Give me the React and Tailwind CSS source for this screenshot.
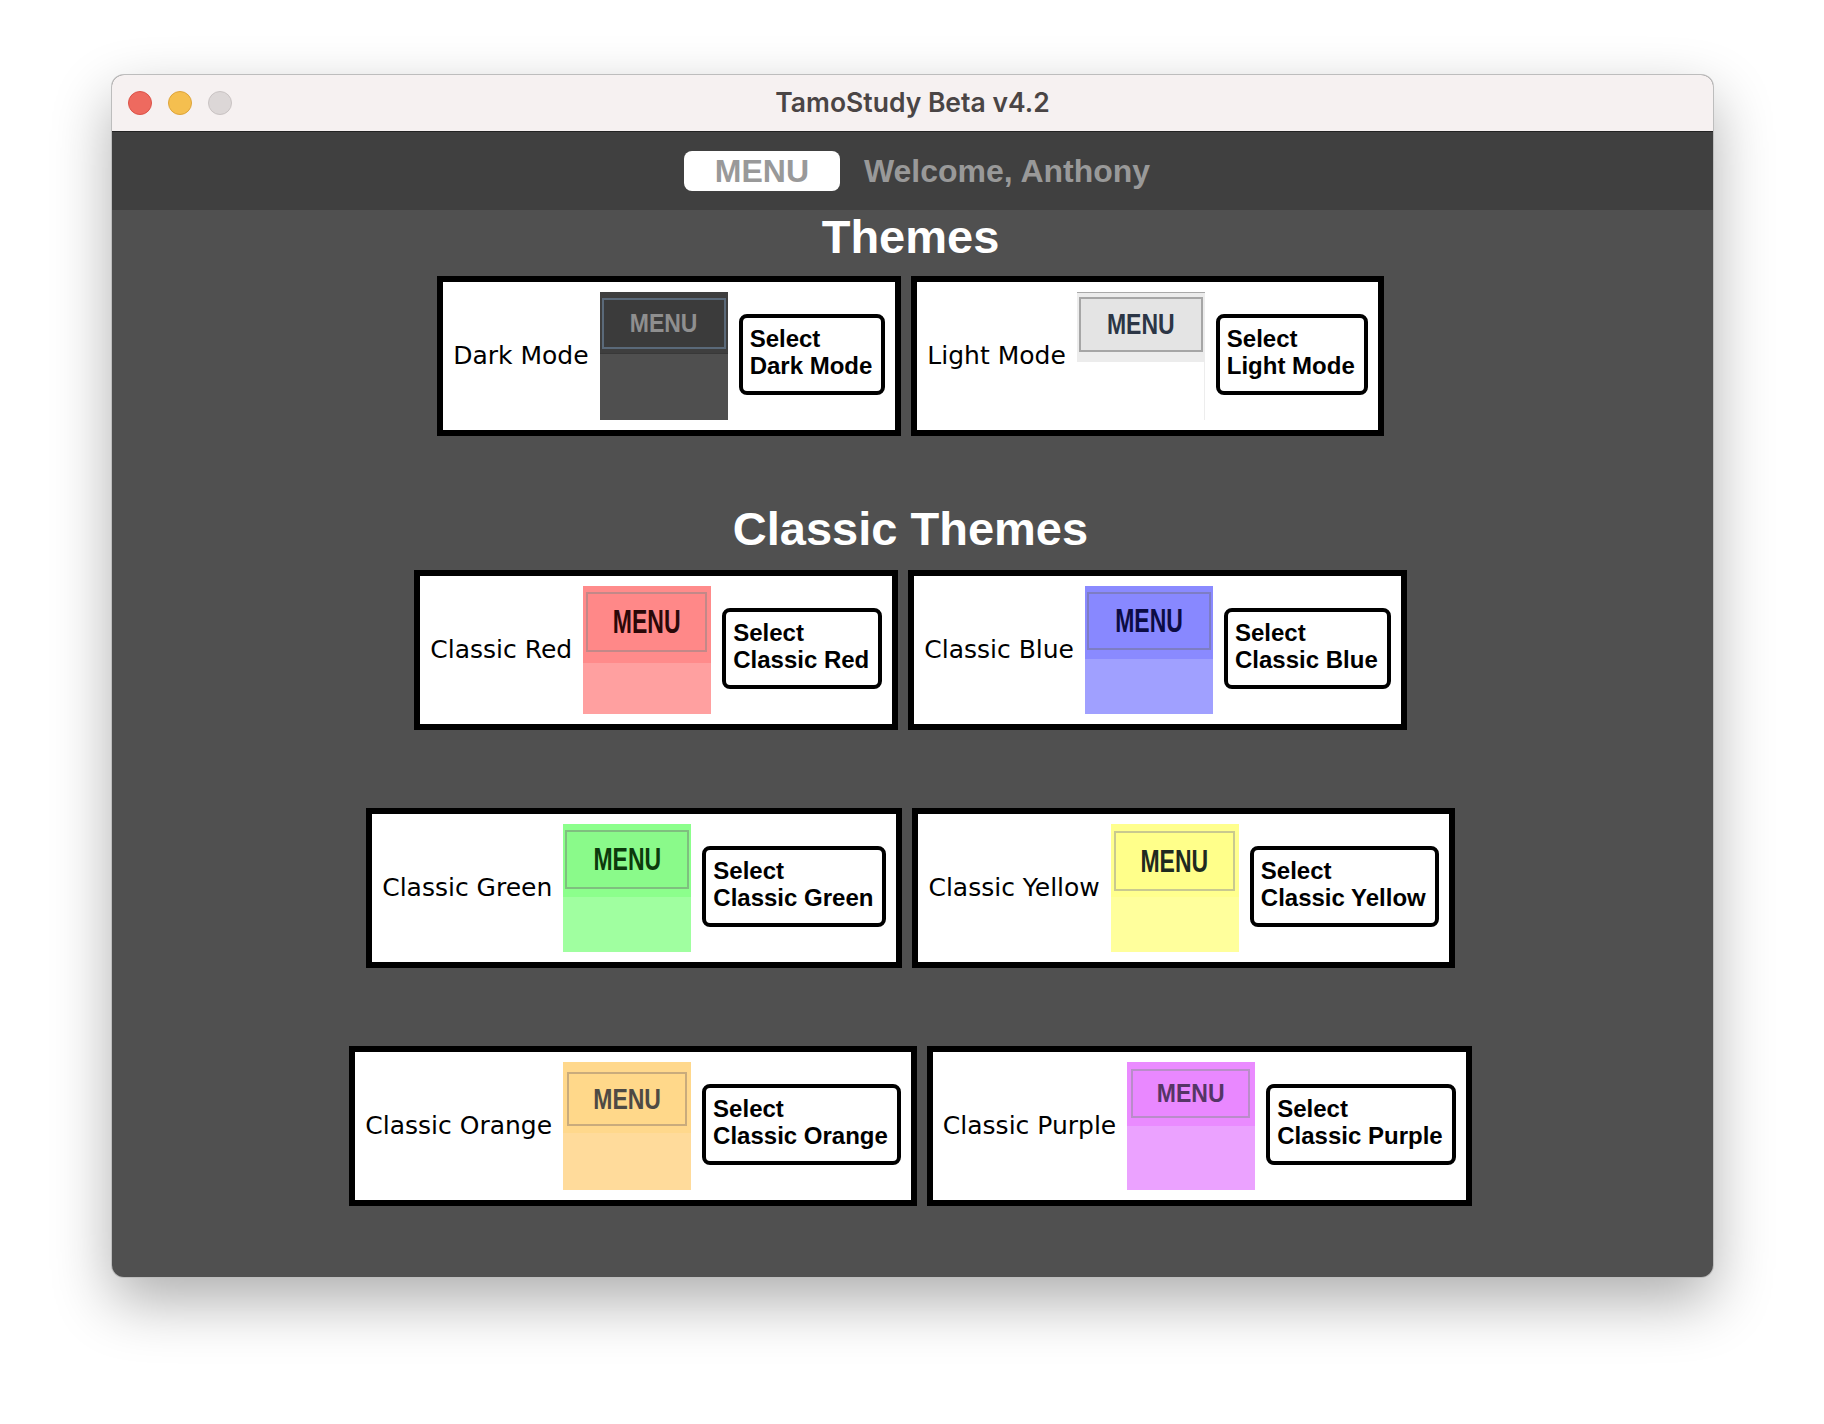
import React from "react";

const THEMES = [
  [
    {
      name: "Dark Mode",
      top: "h-[62px] bg-[#3e3e3e] border-b border-[#383838]",
      body: "bg-[#4f4f4f]",
      menu: "mt-[6px] mx-[2px] h-[51px] bg-[#3b3b3b] border-2 border-[#5a6979] text-[#8f8f8f]",
      scale: "scale-y-[1.15]",
    },
    {
      name: "Light Mode",
      top: "h-[70px] bg-[#ececec] border-t border-[#a9a9a9]",
      body: "bg-white border-r border-[#ededed]",
      menu: "mt-[4px] mx-[2px] h-[55px] bg-[#e4e4e4] border-2 border-[#a6a6a6] text-[#2c3646]",
      scale: "scale-y-[1.25]",
    },
  ],
  [
    {
      name: "Classic Red",
      top: "h-[77px] bg-[#ff8b8b]",
      body: "bg-[#ffa0a0]",
      menu: "mt-[6px] ml-[3px] w-[121px] h-[60px] bg-[#ff8888] border-2 border-[#c38888] text-[#2a0808]",
      scale: "scale-y-[1.45]",
    },
    {
      name: "Classic Blue",
      top: "h-[73px] bg-[#8a8aff]",
      body: "bg-[#a0a0ff]",
      menu: "mt-[6px] mx-[2px] h-[58px] bg-[#8888ff] border-2 border-[#7d7dc4] text-[#0c0c44]",
      scale: "scale-y-[1.45]",
    },
  ],
  [
    {
      name: "Classic Green",
      top: "h-[73px] bg-[#8cff8c]",
      body: "bg-[#a0ffa0]",
      menu: "mt-[6px] mx-[2px] h-[59px] bg-[#8afa8a] border-2 border-[#7fbf7f] text-[#0c3a0c]",
      scale: "scale-y-[1.35]",
    },
    {
      name: "Classic Yellow",
      top: "h-[73px] bg-[#ffff8e]",
      body: "bg-[#ffff9c]",
      menu: "mt-[7px] ml-[3px] w-[121px] h-[60px] bg-[#ffff8a] border-2 border-[#c9c98f] text-[#1f2a1f]",
      scale: "scale-y-[1.35]",
    },
  ],
  [
    {
      name: "Classic Orange",
      top: "h-[71px] bg-[#ffd88c]",
      body: "bg-[#ffdb9b]",
      menu: "mt-[10px] ml-[4px] w-[120px] h-[54px] bg-[#ffd88a] border-2 border-[#c9ab7c] text-[#4e4a44]",
      scale: "scale-y-[1.3]",
    },
    {
      name: "Classic Purple",
      top: "h-[64px] bg-[#ea8bff]",
      body: "bg-[#eba2ff]",
      menu: "mt-[7px] ml-[4px] w-[119px] h-[49px] bg-[#e988ff] border-2 border-[#b98cc9] text-[#553566]",
      scale: "scale-y-[1.15]",
    },
  ],
];

function Preview({ theme }) {
  return (
    <div className="w-[128px] h-[128px] flex flex-col shrink-0 overflow-hidden">
      <div className={`flex flex-col shrink-0 ${theme.top}`}>
        <div className={`flex items-center justify-center ${theme.menu}`}>
          <span
            className={`inline-block text-[23px] leading-none font-bold ${theme.scale}`}
            style={{ fontFamily: '"Liberation Sans", Arial, sans-serif' }}
          >
            MENU
          </span>
        </div>
      </div>
      <div className={`flex-1 ${theme.body}`} />
    </div>
  );
}

function ThemeCard({ theme }) {
  return (
    <div className="flex items-center gap-[11px] border-[6px] border-black bg-white py-[10px] pl-[10px] pr-[10px]">
      <div
        className="text-[25px] text-black whitespace-nowrap"
        style={{ fontFamily: '"DejaVu Sans", sans-serif' }}
      >
        {theme.name}
      </div>
      <Preview theme={theme} />
      <button
        className="mb-[4px] rounded-[8px] border-[4px] border-black bg-white pl-[7px] pr-[9px] pt-[7px] pb-[12px] text-left text-[24px] leading-[27px] font-bold text-black whitespace-nowrap"
        style={{ fontFamily: '"Liberation Sans", Arial, sans-serif' }}
      >
        Select
        <br />
        {theme.name}
      </button>
    </div>
  );
}

function ThemeRow({ pair, className }) {
  return (
    <div className={`flex justify-center gap-[10px] ${className}`}>
      {pair.map((t) => (
        <ThemeCard key={t.name} theme={t} />
      ))}
    </div>
  );
}

export default function App() {
  return (
    <div className="min-h-screen w-full bg-white pt-[75px] pl-[112px]">
      <div className="w-[1601px] h-[1202px] rounded-[12px] overflow-hidden flex flex-col bg-[#505050] ring-1 ring-[#bdbdbd] shadow-[0_24px_60px_rgba(0,0,0,0.32)]">
        {/* title bar */}
        <div className="h-[57px] shrink-0 grid grid-cols-[1fr_auto_1fr] items-center bg-[#f6f1f1] border-b border-[#232323]">
          <div className="flex items-center gap-[16px] pl-[16px]">
            <span className="w-[24px] h-[24px] rounded-full bg-[#ee6a5f] border border-[#dc5248]" />
            <span className="w-[24px] h-[24px] rounded-full bg-[#f5bf4f] border border-[#dea43a]" />
            <span className="w-[24px] h-[24px] rounded-full bg-[#dcd7d7] border border-[#c9c3c3]" />
          </div>
          <div
            className="text-[26.5px] font-semibold text-[#4a4545]"
            style={{ fontFamily: "Inter, sans-serif" }}
          >
            TamoStudy Beta v4.2
          </div>
          <div />
        </div>

        {/* top bar */}
        <div
          className="h-[78px] shrink-0 flex items-center justify-center gap-[24px] pl-[9px] bg-[#404040]"
          style={{ fontFamily: '"Liberation Sans", Arial, sans-serif' }}
        >
          <button className="w-[156px] h-[40px] rounded-[8px] bg-white text-[32px] leading-none font-bold text-[#999999]">
            MENU
          </button>
          <div className="text-[32px] font-bold text-[#999999]">Welcome, Anthony</div>
        </div>

        {/* content */}
        <div
          className="flex-1 flex flex-col items-center pr-[4px]"
          style={{ fontFamily: '"Liberation Sans", Arial, sans-serif' }}
        >
          <h1 className="text-[47px] leading-[53px] font-bold text-white">Themes</h1>
          <ThemeRow pair={THEMES[0]} className="mt-[13px]" />
          <h1 className="mt-[66px] text-[47px] leading-[53px] font-bold text-white">Classic Themes</h1>
          <ThemeRow pair={THEMES[1]} className="mt-[15px]" />
          <ThemeRow pair={THEMES[2]} className="mt-[78px]" />
          <ThemeRow pair={THEMES[3]} className="mt-[78px]" />
        </div>
      </div>
    </div>
  );
}
